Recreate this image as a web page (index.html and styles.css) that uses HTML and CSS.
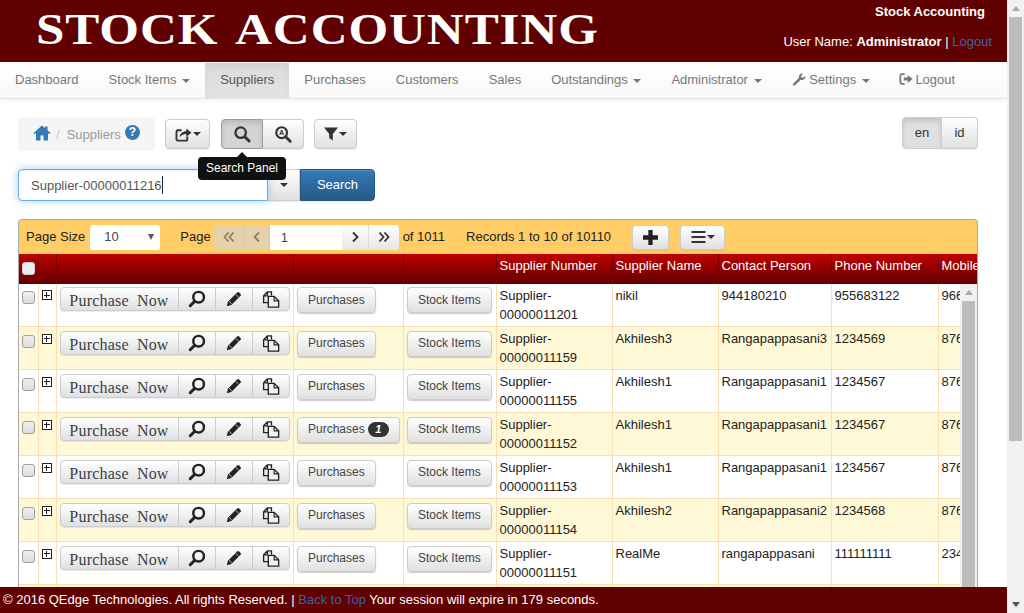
FILE: index.html
```html
<!DOCTYPE html>
<html lang="en">
<head>
<meta charset="utf-8">
<title>Stock Accounting</title>
<link rel="stylesheet" href="styles.css">
</head>
<body>
<svg class="defs" width="0" height="0" aria-hidden="true">
  <symbol id="i-search" viewBox="0 0 20 20"><circle cx="8.500" cy="8.500" r="5.800" fill="none" stroke="currentColor" stroke-width="2.600"/><path d="M12.800 12.800l5 5" stroke="currentColor" stroke-width="3.200" stroke-linecap="round"/></symbol>
  <symbol id="i-search-flip" viewBox="0 0 20 20"><circle cx="11.800" cy="8" r="5.900" fill="none" stroke="currentColor" stroke-width="2.700"/><path d="M7.500 12.500l-5 5" stroke="currentColor" stroke-width="3.400" stroke-linecap="round"/></symbol>
  <symbol id="i-pencil" viewBox="0 0 20 20"><path d="M2 18l1.200-5L13.500 2.700a1.500 1.500 0 0 1 2.100 0l1.700 1.700a1.500 1.500 0 0 1 0 2.100L7 16.800z" fill="currentColor"/><path d="M4.500 12.500l3 3M12 5l3 3" stroke="#e8e8e8" stroke-width=".9"/></symbol>
  <symbol id="i-copy" viewBox="0 0 20 20"><path d="M7 14H1.800V6.500L6 2h4.500v4M6 2.500V6.500H2" fill="none" stroke="currentColor" stroke-width="1.500"/><path d="M7 7h6.500l5 5v7H7z" fill="#f0f0f0" stroke="currentColor" stroke-width="1.500"/><path d="M13.500 7v5h5" fill="none" stroke="currentColor" stroke-width="1.300"/></symbol>
  <symbol id="i-first" viewBox="0 0 12 12"><path d="M5.500 1.500L1.500 6l4 4.500M10.500 1.500L6.500 6l4 4.500" fill="none" stroke="currentColor" stroke-width="1.800"/></symbol>
  <symbol id="i-prev" viewBox="0 0 12 12"><path d="M8 1.500L3.500 6 8 10.500" fill="none" stroke="currentColor" stroke-width="1.800"/></symbol>
  <symbol id="i-next" viewBox="0 0 12 12"><path d="M4 1.500L8.500 6 4 10.500" fill="none" stroke="currentColor" stroke-width="1.800"/></symbol>
  <symbol id="i-last" viewBox="0 0 12 12"><path d="M1.500 1.500L5.500 6l-4 4.500M6.500 1.500L10.500 6l-4 4.500" fill="none" stroke="currentColor" stroke-width="1.800"/></symbol>
</svg>
<div class="window">
  <div class="page">
    <header class="masthead">
      <div class="brand"><span class="brand-text">STOCK ACCOUNTING</span></div>
      <div class="userbox">
        <div class="app-name">Stock Accounting</div>
        <div class="user-line">User Name: <b>Administrator</b> | <a href="#">Logout</a></div>
      </div>
    </header>
    <nav class="navbar">
      <a href="#">Dashboard</a>
      <a href="#">Stock Items <i class="caret"></i></a>
      <a href="#" class="active">Suppliers</a>
      <a href="#">Purchases</a>
      <a href="#">Customers</a>
      <a href="#">Sales</a>
      <a href="#">Outstandings <i class="caret"></i></a>
      <a href="#">Administrator <i class="caret"></i></a>
      <a href="#"><svg class="nav-icon" viewBox="0 0 16 16"><path d="M1.500 13L8 6.500C7.300 4 9.500 1 12.800 1.700L10.500 4.200l.5 2 2 .5 2.300-2.300C16 7.500 13 9.800 10 8.800L3.500 15.200a1.400 1.400 0 0 1-2-2.200z" fill="currentColor"/></svg> Settings <i class="caret"></i></a>
      <a href="#"><svg class="nav-icon out" viewBox="0 0 16 16"><path d="M6.500 2.500H3.500A2 2 0 0 0 1.500 4.500v7a2 2 0 0 0 2 2h3" fill="none" stroke="currentColor" stroke-width="2"/><path d="M5.500 6.200h4.500V3.500L15.500 8 10 12.500V9.800H5.500z" fill="currentColor"/></svg> Logout</a>
    </nav>
    <main class="content">
      <div class="toolbar">
        <div class="crumb">
          <svg class="home" viewBox="0 0 18 16"><path d="M9 0.500L0.500 8l1 1.200L3 8v7.500h4.500v-5h3v5H15V8l1.500 1.200 1-1.200L14.500 5.300V1.500h-2.500v1.700z" fill="currentColor"/></svg>
          <span class="crumb-sep">/</span>
          <span class="crumb-page">Suppliers</span>
          <span class="help">?</span>
        </div>
        <button class="btn tool share"><svg class="tool-icon" viewBox="0 0 18 16"><path d="M13 10v3.500a1 1 0 0 1-1 1H3a1.500 1.500 0 0 1-1.500-1.500V5A1.500 1.500 0 0 1 3 3.500h4" fill="none" stroke="#333" stroke-width="2"/><path d="M5 11c0-4 3-6.500 7-6.500V1.500L17.500 6 12 10.500V7.500c-3 0-5 1-7 3.500z" fill="#333"/></svg><i class="caret dark"></i></button>
        <div class="group search-group">
          <button class="btn seg pressed"><svg class="search-icon"><use href="#i-search"/></svg></button>
          <button class="btn seg"><svg class="search-icon" viewBox="0 0 20 20"><circle cx="8.500" cy="8.500" r="6" fill="none" stroke="#333" stroke-width="2.400"/><path d="M13 13l5 5" stroke="#333" stroke-width="3.200" stroke-linecap="round"/><text x="8.500" y="11.500" class="glyph-a">A</text></svg></button>
        </div>
        <button class="btn tool filter"><svg class="tool-icon narrow" viewBox="0 0 14 14"><path d="M0 .5h14L8.800 7v6.500L5.200 11V7z" fill="#333"/></svg><i class="caret dark"></i></button>
        <div class="group lang">
          <button class="btn seg lang-on">en</button>
          <button class="btn seg lang-off">id</button>
        </div>
      </div>
      <div class="search-row">
        <input class="search-input" type="text" value="Supplier-00000011216">
        <span class="cursor"></span>
        <button class="btn combo"><i class="caret dark"></i></button>
        <button class="btn go">Search</button>
        <div class="tooltip">Search Panel</div>
      </div>
      <section class="panel">
        <div class="pager">
          <span class="lbl-size">Page Size</span>
          <div class="select"><span>10</span><i class="select-arrow"></i></div>
          <span class="lbl-page">Page</span>
          <div class="pages">
            <button class="pg off p-first"><svg><use href="#i-first"/></svg></button>
            <button class="pg off p-prev"><svg><use href="#i-prev"/></svg></button>
            <input class="pg-input" type="text" value="1">
            <button class="pg p-next"><svg><use href="#i-next"/></svg></button>
            <button class="pg p-last"><svg><use href="#i-last"/></svg></button>
          </div>
          <span class="lbl-of">of 1011</span>
          <span class="lbl-rec">Records 1 to 10 of 10110</span>
          <button class="btn pg-tool plus"><svg viewBox="0 0 14 14" class="plus-icon"><path d="M5 0h4v5h5v4H9v5H5V9H0V5h5z" fill="#222"/></svg></button>
          <button class="btn pg-tool menu"><svg viewBox="0 0 14 12" class="menu-icon"><path d="M0 0h14v2H0zM0 5h14v2H0zM0 10h14v2H0z" fill="#333"/></svg><i class="caret dark"></i></button>
        </div>
        <div class="grid-wrap">
          <table class="grid">
            <colgroup><col class="c1"><col class="c2"><col class="c3"><col class="c4"><col class="c5"><col class="c6"><col class="c7"><col class="c8"><col class="c9"><col class="c10"></colgroup>
            <thead>
              <tr><th><span class="check"></span></th><th></th><th></th><th></th><th></th><th>Supplier Number</th><th>Supplier Name</th><th>Contact Person</th><th>Phone Number</th><th>Mobile Number</th></tr>
            </thead>
            <tbody>
              <tr>
                <td><span class="check"></span></td><td><span class="expand"></span></td>
                <td><div class="actions"><button class="act now">Purchase Now</button><button class="act"><svg><use href="#i-search-flip"/></svg></button><button class="act"><svg><use href="#i-pencil"/></svg></button><button class="act"><svg><use href="#i-copy"/></svg></button></div></td>
                <td><button class="btn small">Purchases</button></td><td><button class="btn small stock">Stock Items</button></td>
                <td>Supplier-<br>00000011201</td><td>nikil</td><td>944180210</td><td>955683122</td><td>966683122</td>
              </tr>
              <tr>
                <td><span class="check"></span></td><td><span class="expand"></span></td>
                <td><div class="actions"><button class="act now">Purchase Now</button><button class="act"><svg><use href="#i-search-flip"/></svg></button><button class="act"><svg><use href="#i-pencil"/></svg></button><button class="act"><svg><use href="#i-copy"/></svg></button></div></td>
                <td><button class="btn small">Purchases</button></td><td><button class="btn small stock">Stock Items</button></td>
                <td>Supplier-<br>00000011159</td><td>Akhilesh3</td><td>Rangapappasani3</td><td>1234569</td><td>8765432109</td>
              </tr>
              <tr>
                <td><span class="check"></span></td><td><span class="expand"></span></td>
                <td><div class="actions"><button class="act now">Purchase Now</button><button class="act"><svg><use href="#i-search-flip"/></svg></button><button class="act"><svg><use href="#i-pencil"/></svg></button><button class="act"><svg><use href="#i-copy"/></svg></button></div></td>
                <td><button class="btn small">Purchases</button></td><td><button class="btn small stock">Stock Items</button></td>
                <td>Supplier-<br>00000011155</td><td>Akhilesh1</td><td>Rangapappasani1</td><td>1234567</td><td>8765432109</td>
              </tr>
              <tr>
                <td><span class="check"></span></td><td><span class="expand"></span></td>
                <td><div class="actions"><button class="act now">Purchase Now</button><button class="act"><svg><use href="#i-search-flip"/></svg></button><button class="act"><svg><use href="#i-pencil"/></svg></button><button class="act"><svg><use href="#i-copy"/></svg></button></div></td>
                <td><button class="btn small">Purchases <span class="badge">1</span></button></td><td><button class="btn small stock">Stock Items</button></td>
                <td>Supplier-<br>00000011152</td><td>Akhilesh1</td><td>Rangapappasani1</td><td>1234567</td><td>8765432109</td>
              </tr>
              <tr>
                <td><span class="check"></span></td><td><span class="expand"></span></td>
                <td><div class="actions"><button class="act now">Purchase Now</button><button class="act"><svg><use href="#i-search-flip"/></svg></button><button class="act"><svg><use href="#i-pencil"/></svg></button><button class="act"><svg><use href="#i-copy"/></svg></button></div></td>
                <td><button class="btn small">Purchases</button></td><td><button class="btn small stock">Stock Items</button></td>
                <td>Supplier-<br>00000011153</td><td>Akhilesh1</td><td>Rangapappasani1</td><td>1234567</td><td>8765432109</td>
              </tr>
              <tr>
                <td><span class="check"></span></td><td><span class="expand"></span></td>
                <td><div class="actions"><button class="act now">Purchase Now</button><button class="act"><svg><use href="#i-search-flip"/></svg></button><button class="act"><svg><use href="#i-pencil"/></svg></button><button class="act"><svg><use href="#i-copy"/></svg></button></div></td>
                <td><button class="btn small">Purchases</button></td><td><button class="btn small stock">Stock Items</button></td>
                <td>Supplier-<br>00000011154</td><td>Akhilesh2</td><td>Rangapappasani2</td><td>1234568</td><td>8765432109</td>
              </tr>
              <tr>
                <td><span class="check"></span></td><td><span class="expand"></span></td>
                <td><div class="actions"><button class="act now">Purchase Now</button><button class="act"><svg><use href="#i-search-flip"/></svg></button><button class="act"><svg><use href="#i-pencil"/></svg></button><button class="act"><svg><use href="#i-copy"/></svg></button></div></td>
                <td><button class="btn small">Purchases</button></td><td><button class="btn small stock">Stock Items</button></td>
                <td>Supplier-<br>00000011151</td><td>RealMe</td><td>rangapappasani</td><td>111111111</td><td>2345678901</td>
              </tr>
              <tr><td></td><td></td><td></td><td></td><td></td><td></td><td></td><td></td><td></td><td></td></tr>
            </tbody>
          </table>
          <div class="inner-scroll"><i class="sb-up"></i><div class="inner-thumb"></div></div>
        </div>
      </section>
    </main>
    <footer class="footer">&copy; 2016 QEdge Technologies. All rights Reserved. | <a href="#">Back to Top</a> Your session will expire in 179 seconds.</footer>
  </div>
  <div class="page-scroll"><i class="sb-up"></i><div class="page-thumb"></div><i class="sb-down"></i></div>
</div>
</body>
</html>
```

FILE: styles.css
```css
* { box-sizing: border-box; }
html, body { margin: 0; height: 100%; overflow: hidden; }
body { font: 13px/20px "Liberation Sans", Arial, sans-serif; color: #333; background: #fff; }
a { text-decoration: none; color: inherit; }
button { font: inherit; color: inherit; margin: 0; cursor: pointer; }
.defs { position: absolute; }

.window { display: flex; width: 1024px; height: 613px; overflow: hidden; }
.page { position: relative; width: 1007px; height: 613px; overflow: hidden; flex: none; }

.page-scroll { width: 17px; background: #f1f1f1; display: flex; flex-direction: column; align-items: center; position: relative; }
.page-thumb { width: 13px; height: 424px; background: #bdbdbd; margin-top: 6px; }
.sb-up { display: block; width: 0; height: 0; margin-top: 6px; border: 4px solid transparent; border-top: 0; border-bottom: 5px solid #a8a8a8; }
.sb-down { position: absolute; bottom: 6px; width: 0; height: 0; border: 4px solid transparent; border-bottom: 0; border-top: 5px solid #505050; }

.masthead { height: 62px; background: #600000; color: #fff; display: flex; justify-content: space-between; }
.brand { padding: 5px 0 0 36px; }
.brand-text { display: block; font: bold 44px/50px "Liberation Serif", serif; letter-spacing: .8px; word-spacing: 5px; transform: scaleX(1.16); transform-origin: 0 0; white-space: nowrap; }
.userbox { padding: 2px 15px 0 0; text-align: right; }
.app-name { font-weight: bold; padding-right: 7px; line-height: 20px; }
.user-line { margin-top: 10px; }
.user-line a { color: #2f66ad; }

.navbar { height: 36px; margin-top: 1px; display: flex; background: linear-gradient(#fff, #f8f8f8); border-bottom: 1px solid #e4e4e4; box-shadow: 0 1px 4px rgba(0,0,0,.07); }
.navbar a { padding: 7px 15px; color: #777; height: 35px; white-space: nowrap; }
.navbar a.active { background: linear-gradient(#dbdbdb, #e4e4e4); color: #555; box-shadow: inset 0 3px 9px rgba(0,0,0,.05); }
.caret { display: inline-block; width: 0; height: 0; margin-left: 2px; vertical-align: middle; border-top: 4px solid #777; border-left: 4px solid transparent; border-right: 4px solid transparent; }
.caret.dark { border-top-color: #333; margin-left: 1px; }
.nav-icon { width: 14px; height: 14px; vertical-align: -2px; }
.nav-icon.out { margin: 0 -1px; }

.content { padding: 18px 29px 0 18px; }
.toolbar { display: flex; align-items: flex-start; height: 34px; }
.crumb { width: 137px; height: 34px; background: #f5f5f5; border-radius: 4px; display: flex; align-items: center; padding: 2px 0 0 15px; color: #999; }
.home { width: 18px; height: 16px; color: #337ab7; flex: none; margin-top: -5px; }
.crumb-sep { color: #ccc; margin-left: 5px; }
.crumb-page { margin-left: 7px; color: #999; }
.help { width: 15px; height: 15px; margin: -5px 0 0 4px; border-radius: 50%; background: #337ab7; color: #fff; font: bold 12px/15px "Liberation Sans", sans-serif; text-align: center; }

.btn { border: 1px solid #ccc; border-radius: 4px; background: linear-gradient(#fff, #e0e0e0); box-shadow: inset 0 1px 0 rgba(255,255,255,.15), 0 1px 1px rgba(0,0,0,.075); padding: 0; display: inline-flex; align-items: center; justify-content: center; color: #333; }
.tool { height: 30px; margin-top: 2px; }
.share { width: 45px; margin-left: 10px; }
.filter { width: 43px; margin-left: 10px; }
.tool-icon { width: 17px; height: 15px; }
.tool-icon.narrow { width: 14px; height: 14px; }
.group { display: flex; }
.search-group { margin: 2px 0 0 11px; }
.seg { height: 30px; border-radius: 0; }
.search-group .seg { width: 42px; }
.search-group .seg:first-child { border-radius: 4px 0 0 4px; }
.search-group .seg:last-child { border-radius: 0 4px 4px 0; border-left: 0; width: 41px; }
.seg.pressed { background: #d4d4d4; border-color: #9d9d9d; box-shadow: inset 0 3px 5px rgba(0,0,0,.125); }
.search-icon { width: 18px; height: 18px; color: #333; }
.glyph-a { font: bold 8px "Liberation Sans", sans-serif; text-anchor: middle; fill: #333; }
.lang { margin-left: auto; }
.lang .seg { height: 32px; padding: 0; }
.lang-on { width: 40px; border-radius: 4px 0 0 4px; background: #e0e0e0; box-shadow: inset 0 3px 5px rgba(0,0,0,.125); }
.lang-off { width: 36px; border-radius: 0 4px 4px 0; border-left: 0; }

.search-row { display: flex; margin-top: 18px; position: relative; }
.search-input { width: 250px; height: 32px; padding: 0 12px; border: 1px solid #66afe9; border-radius: 4px 0 0 4px; font: inherit; color: #555; outline: 0; box-shadow: inset 0 1px 1px rgba(0,0,0,.075), 0 0 8px rgba(102,175,233,.6); position: relative; }
.cursor { position: absolute; left: 144px; top: 7px; width: 1px; height: 18px; background: #222; }
.combo { width: 32px; height: 32px; border-radius: 0; border-left: 0; }
.go { width: 75px; height: 32px; border-radius: 0 4px 4px 0; background: linear-gradient(#337ab7, #265a88); border-color: #245580; color: #fff; }
.tooltip { position: absolute; left: 180px; top: -12px; height: 23px; width: 88px; background: #111; color: #fff; border-radius: 4px; font-size: 12px; line-height: 22px; text-align: center; }
.tooltip::before { content: ""; position: absolute; left: 39px; top: -5px; border: 5px solid transparent; border-top: 0; border-bottom-color: #111; }

.panel { margin-top: 18px; width: 960px; border: 1px solid #a9a9a9; border-bottom: 0; border-radius: 4px 4px 0 0; overflow: hidden; }
.pager { height: 34px; background: #fc6; display: flex; align-items: center; padding-left: 7px; color: #222; white-space: nowrap; }
.select { width: 70px; height: 25px; margin-left: 5px; background: #fff; border-radius: 3px; display: flex; justify-content: space-between; align-items: center; padding: 0 6px 0 14px; color: #444; }
.select-arrow { border-top: 6px solid #555; border-left: 3.500px solid transparent; border-right: 3.500px solid transparent; }
.lbl-page { margin-left: 20px; }
.pages { display: flex; margin-left: 3px; height: 25px; }
.pg { height: 25px; border: 1px solid #ddd; border-width: 0 1px 0 0; background: linear-gradient(#fff, #e6e6e6); padding: 0; color: #333; display: flex; align-items: center; justify-content: center; }
.pg svg { width: 12px; height: 12px; }
.p-first { width: 31px; border-radius: 3px 0 0 3px; }
.p-prev { width: 25px; }
.p-next { width: 27px; }
.p-last { width: 30px; border-radius: 0 3px 3px 0; border-right: 0; }
.pg.off { background: #e6d2aa; color: #8a8068; border-color: #dcc89f; }
.pg-input { width: 72px; height: 25px; border: 0; padding: 0 0 0 11px; font: inherit; color: #444; outline: 0; background: #fff; }
.lbl-of { margin-left: 4px; }
.lbl-rec { margin-left: 21px; }
.pg-tool { height: 25px; }
.plus { width: 37px; margin-left: 21px; }
.menu { width: 45px; margin-left: 11px; }
.plus-icon { width: 15px; height: 15px; }
.menu-icon { width: 15px; height: 12px; }

.grid-wrap { position: relative; height: 334px; overflow: hidden; }
.grid { border-collapse: collapse; table-layout: fixed; width: 1059px; }
.c1 { width: 19px; } .c2 { width: 18px; } .c3 { width: 237px; } .c4 { width: 110px; } .c5 { width: 93px; }
.c6 { width: 116px; } .c7 { width: 106px; } .c8 { width: 113px; } .c9 { width: 107px; } .c10 { width: 140px; }
.grid th { height: 30px; padding: 0 3px 6px; background: linear-gradient(#c00000, #600000); color: #fff; font-weight: normal; text-align: left; white-space: nowrap; border-left: 1px solid #7c0000; border-right: 1px solid #7c0000; overflow: hidden; }
.grid td { height: 43px; padding: 2px 3px 0; vertical-align: top; border: 1px solid #fbdfb4; color: #222; line-height: 19px; white-space: nowrap; overflow: hidden; }
.grid th:first-child, .grid td:first-child { border-left: 0; }
.grid tbody tr:first-child td { border-top: 0; height: 42px; }
.grid tbody tr:nth-child(even) td { background: #fff8d6; }
.check { display: block; width: 13px; height: 13px; margin: 6px 0 0; background: linear-gradient(#f0f0f0, #dcdcdc); border: 1px solid #a0a0a0; border-radius: 3px; }
th .check { border-color: #ccc; margin: 5px 0 0; background: #ececec; }
.expand { display: block; width: 10px; height: 10px; margin: 5px 0 0; border: 1px solid #222; background: linear-gradient(#222, #222) center/6px 1px no-repeat, linear-gradient(#222, #222) center/1px 6px no-repeat, #fff; }

.actions { display: inline-flex; height: 24px; border: 1px solid #ccc; border-radius: 4px; background: linear-gradient(#fff, #e0e0e0); margin: 2px 0 0; vertical-align: top; box-shadow: 0 1px 1px rgba(0,0,0,.075); }
.act { width: 37px; height: 22px; border: 0; border-left: 1px solid #ccc; background: transparent; padding: 0; display: flex; align-items: center; justify-content: center; color: #222; }
.act svg { width: 18px; height: 18px; }
.act.now { width: 117px; border-left: 0; padding-top: 3px; font: 16px/19px "Liberation Serif", serif; letter-spacing: .2px; word-spacing: 4px; color: #3a3f4a; }
.small { height: 26px; padding: 0 10.500px; margin: 2px 0 0; font-size: 12px; color: #444; vertical-align: top; box-shadow: 0 1px 1px rgba(0,0,0,.2); }
.grid tbody tr:first-child .check { margin-top: 5px; }
.grid tbody tr:first-child .expand { margin-top: 4px; }
.grid tbody tr:first-child .actions, .grid tbody tr:first-child .small { margin-top: 1px; }
.badge { display: inline-block; min-width: 21px; height: 15px; margin-left: 3px; padding: 0 7px; background: #333; color: #fff; border-radius: 10px; font: italic bold 11px/15px "Liberation Sans", sans-serif; }

.inner-scroll { position: absolute; top: 30px; right: 0; width: 17px; height: 304px; background: #f1f1f1; display: flex; flex-direction: column; align-items: center; }
.inner-thumb { width: 13px; flex: 1; margin-top: 6px; background: #bdbdbd; }

.footer { position: absolute; left: 0; right: 0; bottom: 0; height: 26px; background: #600000; color: #fff; padding: 3px 0 0 3px; white-space: nowrap; }
.footer a { color: #2f66ad; }
```
